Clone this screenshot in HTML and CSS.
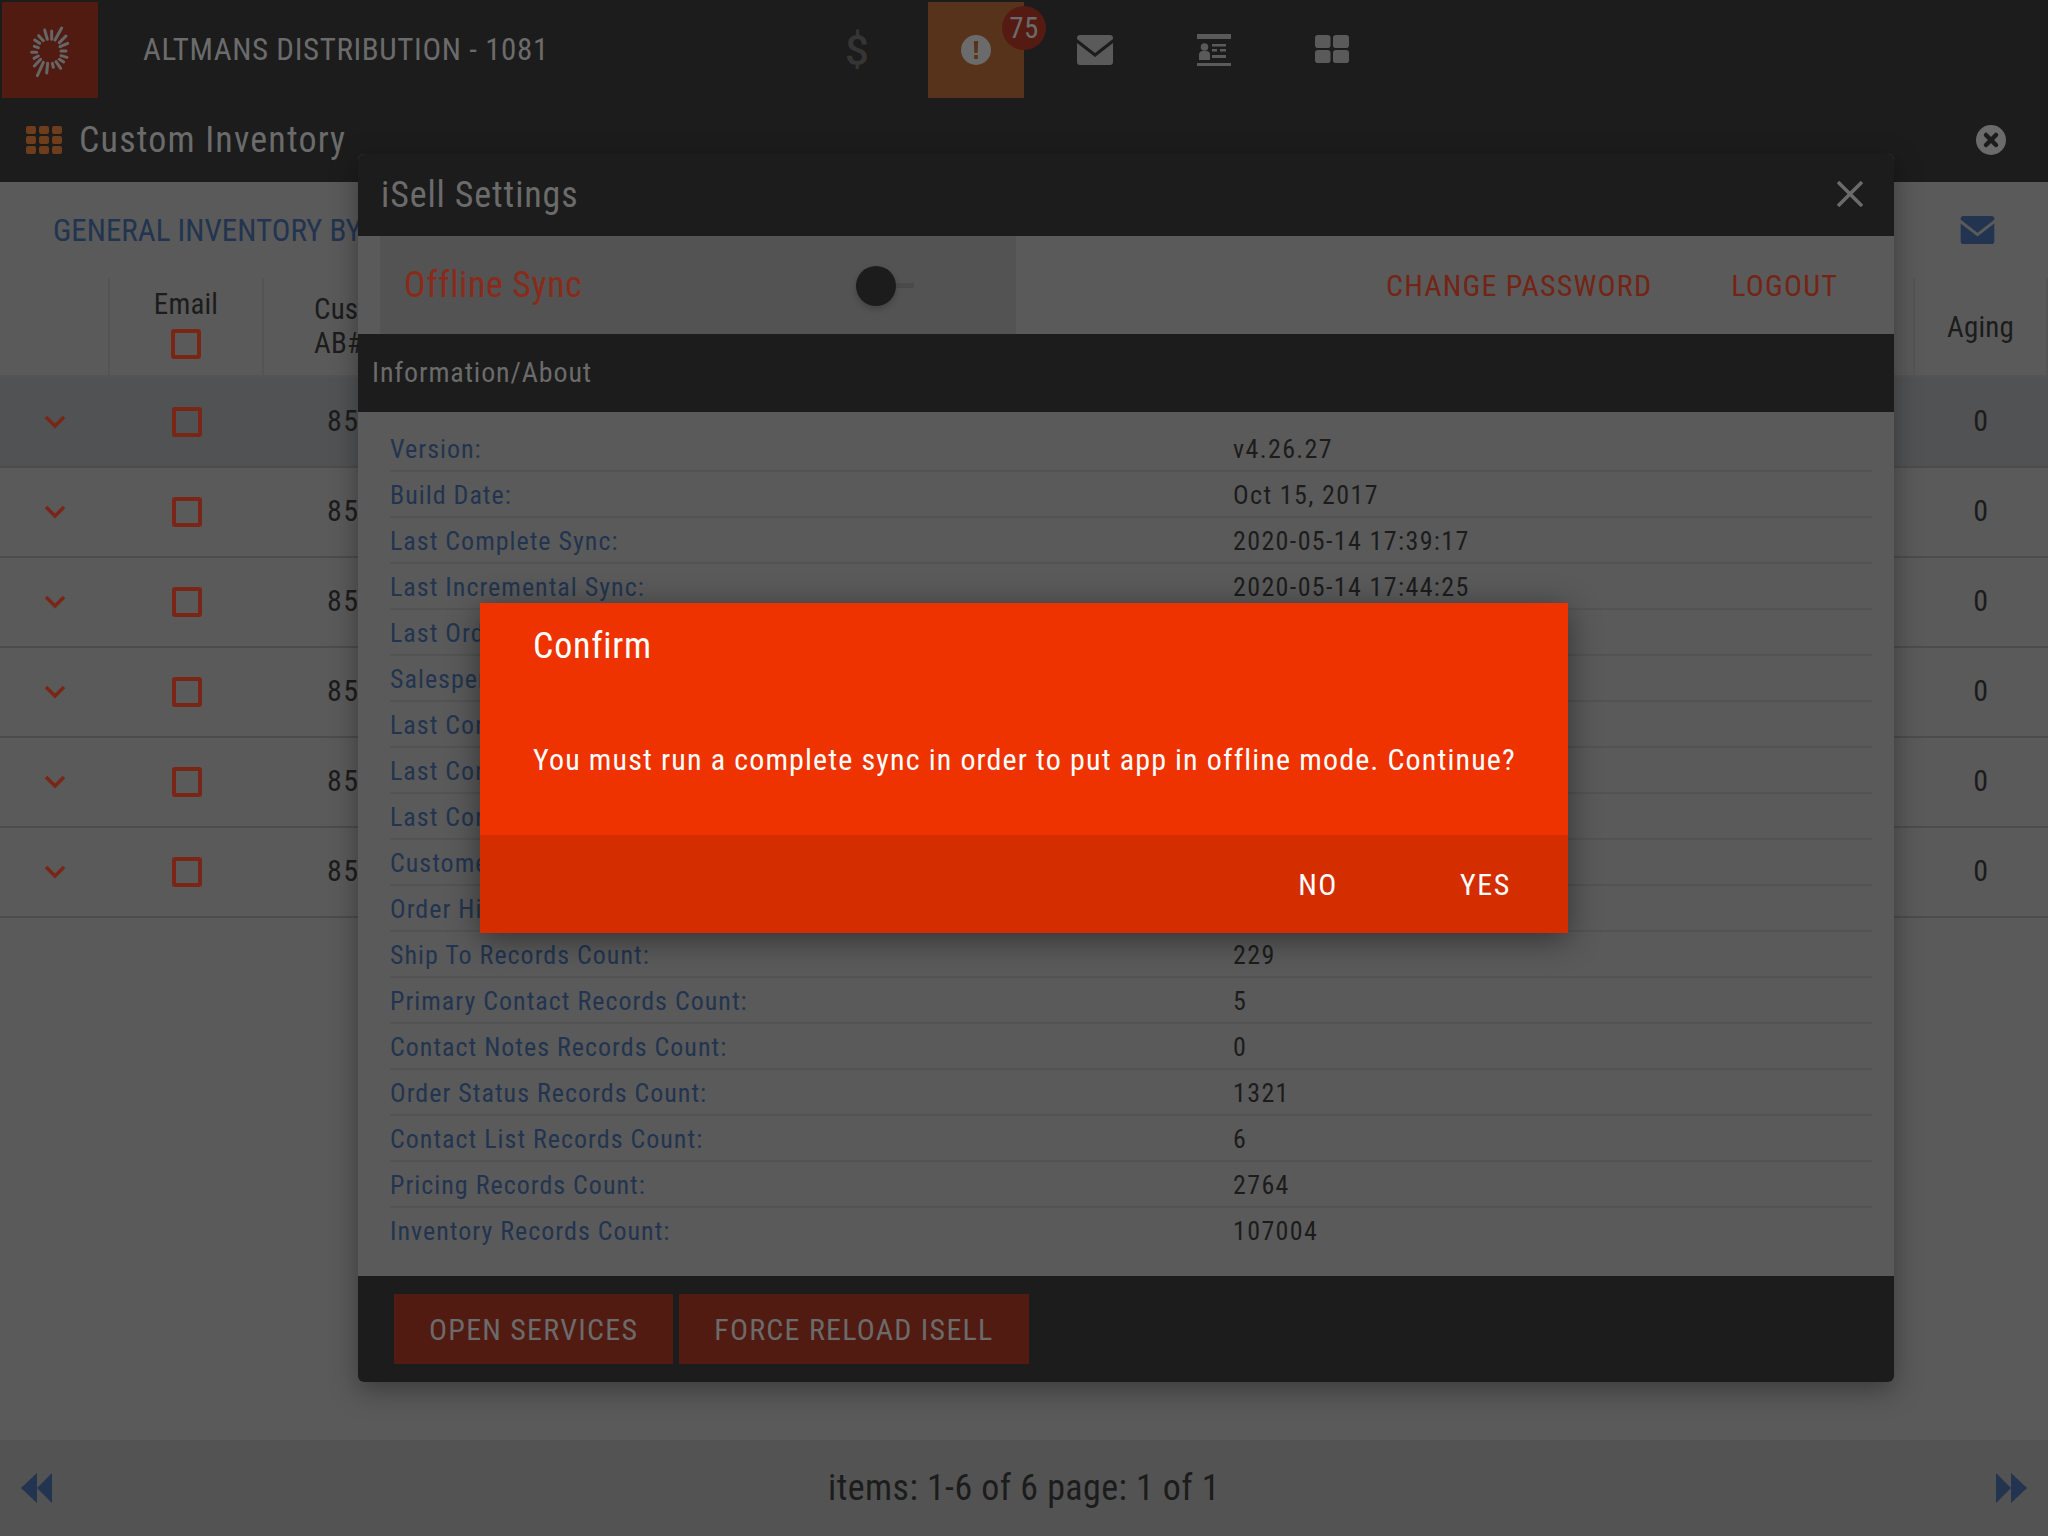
FILE: index.html
```html
<!DOCTYPE html>
<html lang="en">
<head>
    <meta charset="UTF-8">
    <title>iSell - Custom Inventory</title>
    <link rel="stylesheet" href="styles.css">
</head>
<body>

    <div class="page">
        <header class="top">
            <div class="top-row">
                <div class="logo">
                    <svg width="96" height="96" viewBox="6 6 288 288" stroke="#666" stroke-width="9" stroke-linecap="round">
                        <path d="M155 118V93M165 120L185 84M178 128L198 108M180 140L203 130M183 153H198M183 167L201 172M178 178L191 186M168 185L182 205M157 190L160 202M143 190L140 219M130 187L112 227M122 178L103 198M115 168L102 175M110 157H95M115 143L103 139M119 130L104 120M130 122L116 107M142 118L134 90"/>
                    </svg>
                </div>
                <div class="account">ALTMANS DISTRIBUTION - 1081</div>
                <nav class="tiles">
                    <div class="tile dollar">$</div>
                    <div class="tile active">
                        <svg width="30" height="30" viewBox="0 0 30 30"><circle cx="15" cy="15" r="15" fill="#6b6b6b"/><path d="M12.8 6H17.2L16.6 18H13.4ZM13.2 20H16.8V24H13.2Z" fill="#57331c"/></svg>
                        <span class="badge">75</span>
                    </div>
                    <div class="tile">
                        <svg width="36" height="30" viewBox="0 0 36 30"><path d="M3 0H33A3 3 0 0 1 36 3V4L18 18L0 4V3A3 3 0 0 1 3 0ZM0 8L18 22L36 8V27A3 3 0 0 1 33 30H3A3 3 0 0 1 0 27Z" fill="#5a5a5a"/></svg>
                    </div>
                    <div class="tile">
                        <svg width="34" height="32" viewBox="0 0 34 32" fill="#5a5a5a"><path d="M0 0H34V5H0ZM0 29H34V32H0ZM15 10H29V12.500H15ZM15 15H20V17.500H15ZM23 15H29V17.500H23ZM15 21H29V24H15Z"/><circle cx="7.500" cy="13" r="3.800"/><path d="M2 26V21A4 4 0 0 1 6 17H9A4 4 0 0 1 13 21V26Z"/></svg>
                    </div>
                    <div class="tile">
                        <svg class="tile-grid" width="34" height="28" viewBox="0 0 34 30" preserveAspectRatio="none" fill="#5a5a5a"><rect width="15.500" height="14" rx="3"/><rect x="18" width="16" height="14" rx="3"/><rect y="16" width="15.500" height="14" rx="3"/><rect x="18" y="16" width="16" height="14" rx="3"/></svg>
                    </div>
                </nav>
            </div>
            <div class="title-row">
                <svg class="apps" width="36" height="28" viewBox="0 0 36 28" fill="#6e3d1c">
                    <rect width="10" height="8" rx="2"/><rect x="13" width="10" height="8" rx="2"/><rect x="26" width="10" height="8" rx="2"/>
                    <rect y="10" width="10" height="8" rx="2"/><rect x="13" y="10" width="10" height="8" rx="2"/><rect x="26" y="10" width="10" height="8" rx="2"/>
                    <rect y="20" width="10" height="8" rx="2"/><rect x="13" y="20" width="10" height="8" rx="2"/><rect x="26" y="20" width="10" height="8" rx="2"/>
                </svg>
                <h1>Custom Inventory</h1>
                <svg class="page-close" width="30" height="30" viewBox="0 0 30 30"><circle cx="15" cy="15" r="15" fill="#6b6b6b"/><path d="M10 10L20 20M20 10L10 20" stroke="#1c1c1c" stroke-width="4.500" stroke-linecap="round"/></svg>
            </div>
        </header>

        <section class="report-bar">
            <span class="report-name">GENERAL INVENTORY BY CUSTOMER</span>
            <svg class="mail-blue" width="35" height="28" viewBox="0 0 36 30"><path d="M3 0H33A3 3 0 0 1 36 3V4L18 18L0 4V3A3 3 0 0 1 3 0ZM0 8L18 22L36 8V27A3 3 0 0 1 33 30H3A3 3 0 0 1 0 27Z" fill="#22344f"/></svg>
        </section>

        <div class="grid-head">
            <div class="cell"></div>
            <div class="cell email-head">Email<span class="check"></span></div>
            <div class="cell cust-head">Cus<br>AB#</div>
            <div class="cell aging-head">Aging</div>
        </div>
        <div class="grid-row first">
            <div class="cell"><svg class="chevron" width="22" height="14" viewBox="0 0 22 14"><path d="M2 2L11 11L20 2"/></svg></div>
            <div class="cell"><span class="check"></span></div>
            <div class="cell cust">8510</div>
            <div class="cell aging">0</div>
        </div>
        <div class="grid-row">
            <div class="cell"><svg class="chevron" width="22" height="14" viewBox="0 0 22 14"><path d="M2 2L11 11L20 2"/></svg></div>
            <div class="cell"><span class="check"></span></div>
            <div class="cell cust">8511</div>
            <div class="cell aging">0</div>
        </div>
        <div class="grid-row">
            <div class="cell"><svg class="chevron" width="22" height="14" viewBox="0 0 22 14"><path d="M2 2L11 11L20 2"/></svg></div>
            <div class="cell"><span class="check"></span></div>
            <div class="cell cust">8512</div>
            <div class="cell aging">0</div>
        </div>
        <div class="grid-row">
            <div class="cell"><svg class="chevron" width="22" height="14" viewBox="0 0 22 14"><path d="M2 2L11 11L20 2"/></svg></div>
            <div class="cell"><span class="check"></span></div>
            <div class="cell cust">8513</div>
            <div class="cell aging">0</div>
        </div>
        <div class="grid-row">
            <div class="cell"><svg class="chevron" width="22" height="14" viewBox="0 0 22 14"><path d="M2 2L11 11L20 2"/></svg></div>
            <div class="cell"><span class="check"></span></div>
            <div class="cell cust">8514</div>
            <div class="cell aging">0</div>
        </div>
        <div class="grid-row">
            <div class="cell"><svg class="chevron" width="22" height="14" viewBox="0 0 22 14"><path d="M2 2L11 11L20 2"/></svg></div>
            <div class="cell"><span class="check"></span></div>
            <div class="cell cust">8515</div>
            <div class="cell aging">0</div>
        </div>

        <footer class="pager">
            <svg width="31" height="30" viewBox="0 0 31 30" fill="#22344f"><path d="M16 0V30L0 15ZM31 0V30L16 15Z"/></svg>
            <span class="pager-text">items: 1-6 of 6 page: 1 of 1</span>
            <svg width="31" height="30" viewBox="0 0 31 30" fill="#22344f"><path d="M0 0V30L15 15ZM15 0V30L31 15Z"/></svg>
        </footer>
    </div>

    <!-- Settings modal -->
    <div class="settings">
        <div class="settings-head">
            <h2>iSell Settings</h2>
            <svg class="settings-close" width="26" height="26" viewBox="0 0 26 26"><path d="M1 1L25 25M25 1L1 25" stroke="#6b6b6b" stroke-width="3.500"/></svg>
        </div>
        <div class="settings-tools">
            <div class="offline">
                <span class="offline-label">Offline Sync</span>
                <span class="toggle"><span class="knob"></span></span>
            </div>
            <div class="links">
                <span>CHANGE PASSWORD</span>
                <span>LOGOUT</span>
            </div>
        </div>
        <div class="info-bar">Information/About</div>
        <div class="info-list">
            <div class="info-row"><span class="info-label">Version:</span><span>v4.26.27</span></div>
            <div class="info-row"><span class="info-label">Build Date:</span><span>Oct 15, 2017</span></div>
            <div class="info-row"><span class="info-label">Last Complete Sync:</span><span>2020-05-14 17:39:17</span></div>
            <div class="info-row"><span class="info-label">Last Incremental Sync:</span><span>2020-05-14 17:44:25</span></div>
            <div class="info-row"><span class="info-label">Last Order Sync:</span><span></span></div>
            <div class="info-row"><span class="info-label">Salesperson:</span><span></span></div>
            <div class="info-row"><span class="info-label">Last Contact Sync:</span><span></span></div>
            <div class="info-row"><span class="info-label">Last Contact Notes Sync:</span><span></span></div>
            <div class="info-row"><span class="info-label">Last Contact List Sync:</span><span></span></div>
            <div class="info-row"><span class="info-label">Customer Records Count:</span><span></span></div>
            <div class="info-row"><span class="info-label">Order History Records Count:</span><span></span></div>
            <div class="info-row"><span class="info-label">Ship To Records Count:</span><span>229</span></div>
            <div class="info-row"><span class="info-label">Primary Contact Records Count:</span><span>5</span></div>
            <div class="info-row"><span class="info-label">Contact Notes Records Count:</span><span>0</span></div>
            <div class="info-row"><span class="info-label">Order Status Records Count:</span><span>1321</span></div>
            <div class="info-row"><span class="info-label">Contact List Records Count:</span><span>6</span></div>
            <div class="info-row"><span class="info-label">Pricing Records Count:</span><span>2764</span></div>
            <div class="info-row"><span class="info-label">Inventory Records Count:</span><span>107004</span></div>
        </div>
        <div class="settings-foot">
            <button>OPEN SERVICES</button>
            <button>FORCE RELOAD ISELL</button>
        </div>
    </div>

    <!-- Confirm dialog -->
    <div class="confirm">
        <div class="confirm-body">
            <h3>Confirm</h3>
            <p>You must run a complete sync in order to put app in offline mode. Continue?</p>
        </div>
        <div class="confirm-foot">
            <span>NO</span>
            <span>YES</span>
        </div>
    </div>

</body>
</html>
```
FILE: styles.css
```css
* {
    box-sizing: border-box;
}
body {
    margin: 0;
    background-color: #5a5a5a;
    color: #1c1c1c;
    font-family: "Liberation Sans Narrow", "Roboto Condensed", "Liberation Sans", sans-serif;
    overflow: hidden;
}
h1, h2, h3, p {
    margin: 0;
    font-weight: normal;
}
.page {
    height: 1536px;
    display: flex;
    flex-direction: column;
}

/* top bar */
.top {
    height: 182px;
    background-color: #1c1c1c;
    color: #6b6b6b;
}
.top-row {
    display: flex;
    height: 98px;
    padding: 2px 0 0 2px;
}
.logo {
    width: 96px;
    height: 96px;
    background-color: #521b12;
}
.account {
    width: 711px;
    padding-left: 45px;
    font-size: 31px;
    letter-spacing: 0.6px;
    line-height: 96px;
}
.tiles {
    display: flex;
    gap: 23px;
}
.tile {
    position: relative;
    width: 96px;
    height: 96px;
    display: flex;
    align-items: center;
    justify-content: center;
}
.tile.active {
    background-color: #57331c;
}
.tile-grid {
    margin-right: 2px;
    margin-bottom: 2px;
}
.dollar {
    color: #353535;
    font-family: "Roboto", sans-serif;
    font-weight: 500;
    font-size: 42px;
}
.badge {
    position: absolute;
    left: 74px;
    top: 4px;
    width: 44px;
    height: 44px;
    border-radius: 50%;
    background-color: #551b12;
    color: #6b6b6b;
    font-size: 29px;
    letter-spacing: 0.5px;
    line-height: 44px;
    text-align: center;
}
.title-row {
    display: flex;
    align-items: center;
    height: 84px;
    padding: 0 42px 0 26px;
}
.title-row h1 {
    margin-left: 17px;
    font-size: 36px;
    letter-spacing: 1.17px;
}
.page-close {
    margin-left: auto;
}

/* report bar */
.report-bar {
    display: flex;
    align-items: center;
    justify-content: space-between;
    height: 96px;
    padding: 0 53px;
    color: #22344f;
    font-size: 31px;
}

/* inventory grid */
.grid-head, .grid-row {
    display: grid;
    grid-template-columns: 110px 154px 1fr 133px;
    text-align: center;
}
.grid-head {
    height: 100px;
    font-size: 29px;
    letter-spacing: 0.2px;
    border-bottom: 3px solid #545454;
}
.grid-head .cell {
    border-right: 2px solid #545454;
}
.grid-row {
    height: 90px;
    border-bottom: 2px solid #4c4c4c;
    font-size: 30px;
    letter-spacing: 1.5px;
}
.grid-row.first {
    background-color: #505254;
}
.cell {
    display: flex;
    align-items: center;
    justify-content: center;
}
.email-head {
    flex-direction: column;
    gap: 8px;
    padding-bottom: 8px;
}
.cust-head {
    justify-content: flex-start;
    padding-left: 50px;
    padding-bottom: 2px;
    text-align: left;
    line-height: 34px;
}
.cust {
    justify-content: flex-start;
    padding-left: 63px;
    padding-bottom: 3px;
}
.aging {
    padding-bottom: 3px;
}
.check {
    display: block;
    width: 30px;
    height: 30px;
    border: 4px solid #7a2617;
    border-radius: 3px;
}
.chevron {
    fill: none;
    stroke: #7a2617;
    stroke-width: 3.5;
}
.pager {
    display: flex;
    align-items: center;
    justify-content: space-between;
    height: 96px;
    margin-top: auto;
    padding: 0 21px;
    background-color: #535353;
}
.pager-text {
    font-size: 36px;
    letter-spacing: 0.42px;
}

/* settings modal */
.settings {
    position: absolute;
    left: 358px;
    top: 154px;
    width: 1536px;
    height: 1228px;
    display: flex;
    flex-direction: column;
    background-color: #5a5a5a;
    border-radius: 6px;
    box-shadow: 0 8px 28px rgba(0, 0, 0, 0.35);
    overflow: visible;
}
.settings-head {
    display: flex;
    align-items: center;
    justify-content: space-between;
    height: 82px;
    padding: 0 31px 0 23px;
    background-color: #1c1c1c;
    border-radius: 6px 6px 0 0;
    color: #6b6b6b;
}
.settings-head h2 {
    font-size: 36px;
    letter-spacing: 0.87px;
}
.settings-close {
    margin-bottom: 2px;
}
.settings-tools {
    display: flex;
    justify-content: space-between;
    height: 98px;
    padding-left: 22px;
    color: #742415;
}
.offline {
    display: flex;
    align-items: center;
    justify-content: space-between;
    width: 636px;
    padding: 0 102px 0 24px;
    background-color: #535353;
}
.offline-label {
    color: #8a2a1a;
    font-size: 36px;
    letter-spacing: 0.6px;
}
.toggle {
    position: relative;
    display: block;
    width: 58px;
    height: 5px;
    background-color: #4a4a4a;
}
.knob {
    position: absolute;
    left: 0;
    top: -17px;
    width: 40px;
    height: 40px;
    border-radius: 50%;
    background-color: #1c1c1c;
    box-shadow: 0 3px 6px rgba(0, 0, 0, 0.2);
}
.links {
    display: flex;
    align-items: center;
    gap: 79px;
    padding-right: 56px;
    font-size: 30px;
    letter-spacing: 1.2px;
}
.info-bar {
    height: 78px;
    padding-left: 14px;
    background-color: #1c1c1c;
    color: #6b6b6b;
    font-size: 28px;
    letter-spacing: 0.88px;
    line-height: 78px;
}
.info-list {
    flex: 1;
    padding: 14px 22px 0 32px;
}
.info-row {
    display: grid;
    grid-template-columns: 843px 1fr;
    height: 46px;
    border-bottom: 2px solid #535353;
    font-size: 26px;
    letter-spacing: 1.37px;
    line-height: 47px;
}
.info-row:last-child {
    border-bottom: none;
}
.info-label {
    color: #22344f;
    letter-spacing: 1px;
}
.settings-foot {
    display: flex;
    gap: 6px;
    height: 106px;
    padding: 18px 36px;
    background-color: #1c1c1c;
    border-radius: 0 0 6px 6px;
}
.settings-foot button {
    height: 70px;
    padding: 0 35px;
    border: none;
    background-color: #521b12;
    color: #6b6b6b;
    font-family: inherit;
    font-size: 30px;
    letter-spacing: 1.25px;
}

/* confirm dialog */
.confirm {
    position: absolute;
    left: 480px;
    top: 603px;
    width: 1088px;
    height: 330px;
    display: flex;
    flex-direction: column;
    color: white;
    box-shadow: 0 6px 30px rgba(0, 0, 0, 0.45);
}
.confirm-body {
    height: 232px;
    padding: 22px 53px 0;
    background-color: #ee3300;
}
.confirm-body h3 {
    font-size: 36px;
    letter-spacing: 0.75px;
    line-height: 42px;
}
.confirm-body p {
    margin-top: 72px;
    font-size: 30px;
    letter-spacing: 1.14px;
    line-height: 42px;
    white-space: nowrap;
}
.confirm-foot {
    display: flex;
    align-items: center;
    justify-content: flex-end;
    gap: 122px;
    flex: 1;
    padding-right: 57px;
    background-color: #d32d00;
    font-size: 30px;
    letter-spacing: 1.6px;
}
```
